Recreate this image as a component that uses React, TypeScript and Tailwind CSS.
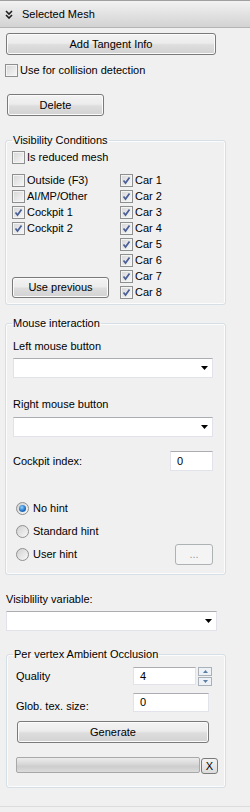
import React from "react";

function CheckBox({ checked }: { checked?: boolean }) {
  return (
    <span className="w-[13px] h-[13px] shrink-0 border border-[#8e8f8f] bg-[linear-gradient(135deg,#d6d6d6,#f8f8f8)] shadow-[inset_0_0_0_1px_#f4f4f4] flex items-center justify-center">
      {checked && (
        <svg width="9" height="9" viewBox="0 0 9 9">
          <path d="M1.5 4.5 L3.5 7 L7.5 1.5" fill="none" stroke="#4a5f97" strokeWidth="1.7" />
        </svg>
      )}
    </span>
  );
}

function CheckRow({ label, checked, className = "" }: { label: string; checked?: boolean; className?: string }) {
  return (
    <div className={`flex items-center gap-[2px] h-[16px] ${className}`}>
      <CheckBox checked={checked} />
      <span>{label}</span>
    </div>
  );
}

function Radio({ label, checked }: { label: string; checked?: boolean }) {
  return (
    <div className="flex items-center gap-[4px]">
      <span className="w-[13px] h-[13px] rounded-full border border-[#8e8f8f] bg-[linear-gradient(135deg,#d0d0d0,#f9f9f9)] flex items-center justify-center">
        {checked && (
          <span className="w-[7px] h-[7px] rounded-full bg-[radial-gradient(circle_at_40%_35%,#8ed0ff,#1b6bc0_60%,#0f4a8a)]" />
        )}
      </span>
      <span>{label}</span>
    </div>
  );
}

function Button({ label, className = "" }: { label: string; className?: string }) {
  return (
    <div
      className={`rounded-[3px] border border-[#7a7a7a] bg-[linear-gradient(#f3f3f3,#ececec_45%,#dddddd_55%,#d2d2d2)] shadow-[inset_0_0_0_1px_#fbfbfb] flex items-center justify-center ${className}`}
    >
      {label}
    </div>
  );
}

function Combo({ className = "" }: { className?: string }) {
  return (
    <div className={`h-[20px] bg-white border border-[#e2e3ea] border-t-[#abadb3] flex items-center justify-end pr-[4px] ${className}`}>
      <svg width="7" height="4" viewBox="0 0 7 4">
        <polygon points="0,0 7,0 3.5,4" fill="#000" />
      </svg>
    </div>
  );
}

function Field({ value, className = "" }: { value: string; className?: string }) {
  return (
    <div className={`bg-white border border-[#e2e3ea] border-t-[#abadb3] flex items-center pl-[6px] ${className}`}>
      {value}
    </div>
  );
}

function Group({ title, className = "", children }: { title: string; className?: string; children: React.ReactNode }) {
  return (
    <fieldset className={`border border-[#d5dfe5] rounded-[3px] shadow-[inset_0_0_0_1px_#fcfcfc] ${className}`}>
      <legend className="ml-[6px] px-[1px] leading-[13px]">{title}</legend>
      {children}
    </fieldset>
  );
}

export default function App() {
  return (
    <div className="w-[250px] h-[812px] bg-[#f0f0f0] font-['Liberation_Sans',Arial,sans-serif] text-[11px] leading-[13px] text-black overflow-hidden">
      <div className="h-[28px] border-t border-b border-t-[#a0a0a0] border-b-[#b4b4b4] bg-[linear-gradient(#f2f2f2,#e2e2e2_50%,#d3d3d3)] flex items-center pl-[5px] gap-[9px]">
        <svg width="8" height="9" viewBox="0 0 8 9">
          <path d="M1 1 L4 4 L7 1 M1 5 L4 8 L7 5" fill="none" stroke="#202020" strokeWidth="1.6" />
        </svg>
        <span className="text-[11px]">Selected Mesh</span>
      </div>

      <Button label="Add Tangent Info" className="mt-[5px] ml-[6px] w-[210px] h-[22px]" />

      <div className="mt-[9px] ml-[5px] h-[13px] flex items-center gap-[2px]">
        <CheckBox />
        <span>Use for collision detection</span>
      </div>

      <Button label="Delete" className="mt-[17px] ml-[7px] w-[97px] h-[22px]" />

      <Group title="Visibility Conditions" className="mt-[18px] ml-[5px] w-[221px]">
        <div className="pl-[6px] pb-[4px]">
          <CheckRow label="Is reduced mesh" className="mt-[2px]" />
          <div className="mt-[7px] flex">
            <div className="w-[108px] flex flex-col">
              <CheckRow label="Outside (F3)" />
              <CheckRow label="AI/MP/Other" />
              <CheckRow label="Cockpit 1" checked />
              <CheckRow label="Cockpit 2" checked />
              <Button label="Use previous" className="mt-auto mb-[2px] w-[97px] h-[21px]" />
            </div>
            <div className="flex flex-col">
              {[1, 2, 3, 4, 5, 6, 7, 8].map((n) => (
                <CheckRow key={n} label={`Car ${n}`} checked />
              ))}
            </div>
          </div>
        </div>
      </Group>

      <Group title="Mouse interaction" className="mt-[12px] ml-[5px] w-[221px]">
        <div className="pl-[7px] pr-[12px] pb-[9px]">
          <div className="mt-[10px]">Left mouse button</div>
          <Combo className="mt-[5px] w-[200px]" />
          <div className="mt-[20px]">Right mouse button</div>
          <Combo className="mt-[6px] w-[200px]" />
          <div className="mt-[14px] h-[20px] flex items-center justify-between">
            <span>Cockpit index:</span>
            <Field value="0" className="w-[43px] h-[20px]" />
          </div>
          <div className="mt-[27px] ml-[3px] h-[20px] flex items-center">
            <Radio label="No hint" checked />
          </div>
          <div className="mt-[3px] ml-[3px] h-[20px] flex items-center">
            <Radio label="Standard hint" />
          </div>
          <div className="mt-[3px] ml-[3px] h-[21px] flex items-center justify-between">
            <Radio label="User hint" />
            <div className="w-[38px] h-[21px] rounded-[3px] border border-[#adb2b5] bg-[#f4f4f4] text-[#9a9a9a] flex items-center justify-center">
              ...
            </div>
          </div>
        </div>
      </Group>

      <div className="mt-[18px] ml-[6px]">Visiblility variable:</div>
      <Combo className="mt-[5px] ml-[6px] w-[211px]" />

      <Group title="Per vertex Ambient Occlusion" className="mt-[17px] ml-[6px] w-[220px]">
        <div className="pl-[9px] pb-[13px]">
          <div className="mt-[6px] h-[18px] flex items-center">
            <span className="w-[117px]">Quality</span>
            <Field value="4" className="w-[63px] h-[18px]" />
            <div className="ml-[2px] flex flex-col gap-[1px]">
              <div className="w-[14px] h-[9px] border border-[#a9b1ba] bg-[#eef1f5] flex items-center justify-center">
                <svg width="5" height="3" viewBox="0 0 5 3">
                  <polygon points="0,3 5,3 2.5,0" fill="#5a7fa6" />
                </svg>
              </div>
              <div className="w-[14px] h-[9px] border border-[#a9b1ba] bg-[#eef1f5] flex items-center justify-center">
                <svg width="5" height="3" viewBox="0 0 5 3">
                  <polygon points="0,0 5,0 2.5,3" fill="#5a7fa6" />
                </svg>
              </div>
            </div>
          </div>
          <div className="mt-[8px] h-[19px] flex">
            <span className="w-[117px] pt-[7px]">Glob. tex. size:</span>
            <Field value="0" className="w-[76px] h-[19px]" />
          </div>
          <Button label="Generate" className="mt-[9px] ml-[1px] w-[192px] h-[22px]" />
          <div className="mt-[14px] flex items-start">
            <div className="w-[184px] h-[16px] rounded-[2px] border border-[#a8a8a8] bg-[linear-gradient(#ececec,#dadada_40%,#cdcdcd_60%,#dcdcdc)]" />
            <div className="ml-[1px] mt-[1px] w-[17px] h-[16px] rounded-[3px] border border-[#7a7a7a] bg-[linear-gradient(#f3f3f3,#dcdcdc)] flex items-center justify-center text-[11px]">
              X
            </div>
          </div>
        </div>
      </Group>

      <div className="mt-[18px] border-b border-[#dcdcdc] h-0" />
    </div>
  );
}
